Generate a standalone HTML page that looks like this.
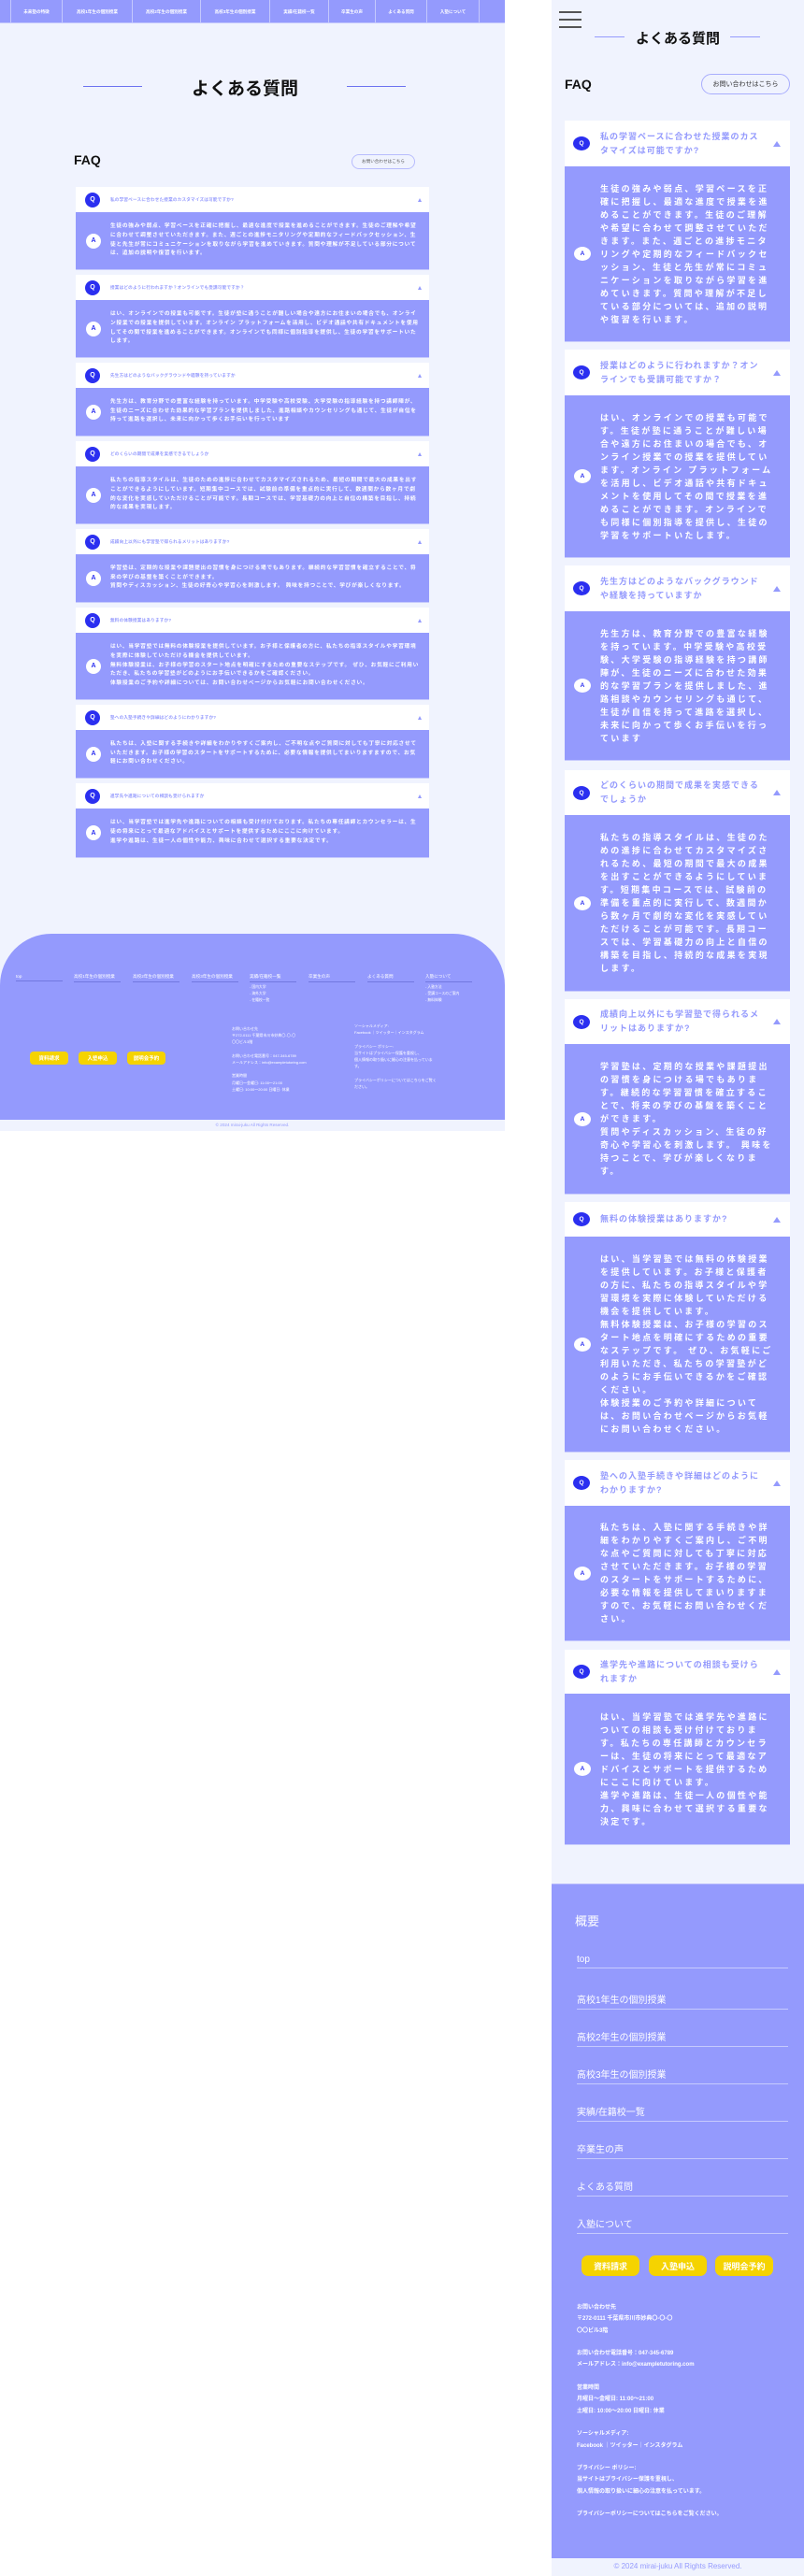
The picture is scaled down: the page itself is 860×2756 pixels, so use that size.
<!DOCTYPE html>
<html><head><meta charset="utf-8">
<style>
*{margin:0;padding:0;box-sizing:border-box}
body{width:860px;height:2756px;background:#fff;position:relative;font-family:"Liberation Sans","Noto Sans CJK JP",sans-serif;overflow:hidden}
.abs{position:absolute}
#dk{position:absolute;left:0;top:0;width:540px;height:1210px;background:#f0f3fe}
#mb{position:absolute;left:590px;top:0;width:270px;height:2756px;background:#f0f3fe}
.nav{position:absolute;left:0;top:0;width:540px;height:25px;background:#949afd;border-bottom:1px solid #c4c8fd}
.nav div{position:absolute;top:0;height:25px;border-left:1px solid #c4c8fd;color:#fff;font-size:4.6px;font-weight:bold;display:flex;align-items:center;justify-content:center}
.dq{position:absolute;left:81px;width:378px;background:#fff;display:flex;align-items:center}
.da{position:absolute;left:81px;width:378px;background:#949afd;border-bottom:1px solid #c6cafd;display:flex;align-items:center}
.dq .c{position:absolute;left:10px;width:16px;height:16px;border-radius:50%;background:#2b2ff0;color:#fff;font-size:7px;font-weight:bold;display:flex;align-items:center;justify-content:center}
.dq .t{position:absolute;left:37px;color:#949afd;font-size:4.6px;font-weight:bold;letter-spacing:.2px}
.dq .tr{position:absolute;right:8px;width:0;height:0;border-left:2.5px solid transparent;border-right:2.5px solid transparent;border-bottom:4px solid #949afd}
.da .c{position:absolute;left:11px;width:16px;height:16px;border-radius:50%;background:#fff;color:#2b2ff0;font-size:7px;font-weight:bold;display:flex;align-items:center;justify-content:center}
.da .t{position:absolute;left:37px;right:9px;color:#fff;font-size:5.7px;font-weight:bold;letter-spacing:.75px;line-height:9.8px}
.mq{position:absolute;left:14px;width:241px;background:#fff;display:flex;align-items:center}
.ma{position:absolute;left:14px;width:241px;background:#949afd;border-bottom:1px solid #c6cafd;display:flex;align-items:center}
.mq .c{position:absolute;left:9px;width:18px;height:15px;border-radius:50%;background:#2b2ff0;color:#fff;font-size:6.5px;font-weight:bold;display:flex;align-items:center;justify-content:center}
.mq .t{position:absolute;left:38px;right:28px;color:#949afd;font-size:9px;font-weight:bold;letter-spacing:1px;line-height:15px}
.mq .tr{position:absolute;right:10px;width:0;height:0;border-left:4.5px solid transparent;border-right:4.5px solid transparent;border-bottom:6px solid #949afd}
.ma .c{position:absolute;left:10px;width:18px;height:15px;border-radius:50%;background:#fff;color:#2b2ff0;font-size:6.5px;font-weight:bold;display:flex;align-items:center;justify-content:center}
.ma .t{position:absolute;left:38px;width:186px;color:#fff;font-size:9px;font-weight:bold;letter-spacing:2.3px;line-height:14px}
.fl{position:absolute;top:1042px;width:50px;border-bottom:1px solid #7278e0;color:#fff;font-size:4.6px;padding-bottom:2px}
.sub{position:absolute;color:#fff;font-size:3.8px;line-height:7px}
.yb{position:absolute;background:#f5d300;color:#fff;border-radius:4px;display:flex;align-items:center;justify-content:center;font-weight:bold}
.ml{position:absolute;left:27px;width:226px;border-bottom:1.5px solid #c6cafd;color:#fff;font-size:10px;padding-bottom:3px}
</style></head><body>

<div id="dk">
 <div class="nav">
  <div style="left:11px;width:55px">未来塾の特徴</div>
  <div style="left:66px;width:75px">高校1年生の個別授業</div>
  <div style="left:141px;width:73px">高校2年生の個別授業</div>
  <div style="left:214px;width:74px">高校3年生の個別授業</div>
  <div style="left:288px;width:63px">実績/在籍校一覧</div>
  <div style="left:351px;width:50px">卒業生の声</div>
  <div style="left:401px;width:55px">よくある質問</div>
  <div style="left:456px;width:56px">入塾について</div>
  <div style="left:512px;width:28px"></div>
 </div>
 <div class="abs" style="left:89px;top:92px;width:63px;height:1px;background:#6c72f0"></div>
 <div class="abs" style="left:371px;top:92px;width:63px;height:1px;background:#6c72f0"></div>
 <div class="abs" style="left:200px;top:80px;width:124px;text-align:center;font-size:19px;font-weight:bold;color:#111">よくある質問</div>
 <div class="abs" style="left:79px;top:163px;font-size:14px;font-weight:bold;color:#111">FAQ</div>
 <div class="abs" style="left:376px;top:165px;width:68px;height:16px;border:1px solid #b8bcfd;border-radius:8px;font-size:4.6px;color:#555;display:flex;align-items:center;justify-content:center">お問い合わせはこちら</div>

 <div class="dq" style="top:200px;height:27px"><div class="c">Q</div><div class="t">私の学習ペースに合わせた授業のカスタマイズは可能ですか?</div><div class="tr"></div></div>
 <div class="da" style="top:227px;height:62px"><div class="c">A</div><div class="t">生徒の強みや弱点、学習ペースを正確に把握し、最適な進度で授業を進めることができます。生徒のご理解や希望に合わせて調整させていただきます。また、週ごとの進捗モニタリングや定期的なフィードバックセッション、生徒と先生が常にコミュニケーションを取りながら学習を進めていきます。質問や理解が不足している部分については、追加の説明や復習を行います。</div></div>

 <div class="dq" style="top:294px;height:27px"><div class="c">Q</div><div class="t">授業はどのように行われますか？オンラインでも受講可能ですか？</div><div class="tr"></div></div>
 <div class="da" style="top:321px;height:62px"><div class="c">A</div><div class="t">はい、オンラインでの授業も可能です。生徒が塾に通うことが難しい場合や遠方にお住まいの場合でも、オンライン授業での授業を提供しています。オンライン プラットフォームを活用し、ビデオ通話や共有ドキュメントを使用してその間で授業を進めることができます。オンラインでも同様に個別指導を提供し、生徒の学習をサポートいたします。</div></div>

 <div class="dq" style="top:388px;height:27px"><div class="c">Q</div><div class="t">先生方はどのようなバックグラウンドや経験を持っていますか</div><div class="tr"></div></div>
 <div class="da" style="top:415px;height:52px"><div class="c">A</div><div class="t">先生方は、教育分野での豊富な経験を持っています。中学受験や高校受験、大学受験の指導経験を持つ講師陣が、生徒のニーズに合わせた効果的な学習プランを提供しました、進路相談やカウンセリングも通じて、生徒が自信を持って進路を選択し、未来に向かって歩くお手伝いを行っています</div></div>

 <div class="dq" style="top:472px;height:27px"><div class="c">Q</div><div class="t">どのくらいの期間で成果を実感できるでしょうか</div><div class="tr"></div></div>
 <div class="da" style="top:499px;height:62px"><div class="c">A</div><div class="t">私たちの指導スタイルは、生徒のための進捗に合わせてカスタマイズされるため、最短の期間で最大の成果を出すことができるようにしています。短期集中コースでは、試験前の準備を重点的に実行して、数週間から数ヶ月で劇的な変化を実感していただけることが可能です。長期コースでは、学習基礎力の向上と自信の構築を目指し、持続的な成果を実現します。</div></div>

 <div class="dq" style="top:566px;height:27px"><div class="c">Q</div><div class="t">成績向上以外にも学習塾で得られるメリットはありますか?</div><div class="tr"></div></div>
 <div class="da" style="top:593px;height:52px"><div class="c">A</div><div class="t">学習塾は、定期的な授業や課題提出の習慣を身につける場でもあります。継続的な学習習慣を確立することで、将来の学びの基盤を築くことができます。<br>質問やディスカッション、生徒の好奇心や学習心を刺激します。 興味を持つことで、学びが楽しくなります。</div></div>

 <div class="dq" style="top:650px;height:27px"><div class="c">Q</div><div class="t">無料の体験授業はありますか?</div><div class="tr"></div></div>
 <div class="da" style="top:677px;height:72px"><div class="c">A</div><div class="t">はい、当学習塾では無料の体験授業を提供しています。お子様と保護者の方に、私たちの指導スタイルや学習環境を実際に体験していただける機会を提供しています。<br>無料体験授業は、お子様の学習のスタート地点を明確にするための重要なステップです。 ぜひ、お気軽にご利用いただき、私たちの学習塾がどのようにお手伝いできるかをご確認ください。<br>体験授業のご予約や詳細については、お問い合わせページからお気軽にお問い合わせください。</div></div>

 <div class="dq" style="top:754px;height:27px"><div class="c">Q</div><div class="t">塾への入塾手続きや詳細はどのようにわかりますか?</div><div class="tr"></div></div>
 <div class="da" style="top:781px;height:52px"><div class="c">A</div><div class="t">私たちは、入塾に関する手続きや詳細をわかりやすくご案内し、ご不明な点やご質問に対しても丁寧に対応させていただきます。お子様の学習のスタートをサポートするために、必要な情報を提供してまいりますますので、お気軽にお問い合わせください。</div></div>

 <div class="dq" style="top:838px;height:27px"><div class="c">Q</div><div class="t">進学先や進路についての相談も受けられますか</div><div class="tr"></div></div>
 <div class="da" style="top:865px;height:53px"><div class="c">A</div><div class="t">はい、当学習塾では進学先や進路についての相談も受け付けております。私たちの専任講師とカウンセラーは、生徒の将来にとって最適なアドバイスとサポートを提供するためにここに向けています。<br>進学や進路は、生徒一人の個性や能力、興味に合わせて選択する重要な決定です。</div></div>

 <div class="abs" style="left:0;top:999px;width:540px;height:199px;background:#949afd;border-radius:55px 55px 0 0"></div>
 <div class="fl" style="left:17px">top</div>
 <div class="fl" style="left:79px">高校1年生の個別授業</div>
 <div class="fl" style="left:142px">高校2年生の個別授業</div>
 <div class="fl" style="left:205px">高校3年生の個別授業</div>
 <div class="fl" style="left:267px">実績/在籍校一覧</div>
 <div class="fl" style="left:330px">卒業生の声</div>
 <div class="fl" style="left:393px">よくある質問</div>
 <div class="fl" style="left:455px">入塾について</div>
 <div class="sub" style="left:267px;top:1053px">- 国内大学<br>- 海外大学<br>- 在籍校一覧</div>
 <div class="sub" style="left:455px;top:1053px">- 入塾方法<br>- 受講コースのご案内<br>- 無料体験</div>
 <div class="yb" style="left:32px;top:1125px;width:41px;height:14px;font-size:5.5px">資料請求</div>
 <div class="yb" style="left:84px;top:1125px;width:41px;height:14px;font-size:5.5px">入塾申込</div>
 <div class="yb" style="left:136px;top:1125px;width:41px;height:14px;font-size:5.5px">説明会予約</div>
 <div class="sub" style="left:248px;top:1097px;font-size:4px;line-height:7.2px">お問い合わせ先<br>〒272-0111 千葉県市川市妙典〇-〇-〇<br>〇〇ビル3階<br><br>お問い合わせ電話番号：047-345-6789<br>メールアドレス：info@exampletutoring.com<br><br>営業時間<br>月曜日～金曜日: 11:00～21:00<br>土曜日: 10:00～20:00 日曜日: 休業</div>
 <div class="sub" style="left:379px;top:1094px;font-size:4px;line-height:7.2px">ソーシャルメディア:<br>Facebook ｜ツイッター｜インスタグラム<br><br>プライバシー ポリシー:<br>当サイトはプライバシー保護を重視し、<br>個人情報の取り扱いに細心の注意を払っていま<br>す。<br><br>プライバシーポリシーについてはこちらをご覧く<br>ださい。</div>
 <div class="abs" style="left:0;top:1198px;width:540px;height:12px;text-align:center;font-size:4.6px;line-height:12px;color:#949afd">© 2024 mirai-juku All Rights Reserved.</div>
</div>

<div id="mb">
 <div class="abs" style="left:8px;top:12px;width:24px;height:1.5px;background:#555"></div>
 <div class="abs" style="left:8px;top:20px;width:24px;height:1.5px;background:#555"></div>
 <div class="abs" style="left:8px;top:28px;width:24px;height:1.5px;background:#555"></div>
 <div class="abs" style="left:46px;top:39px;width:32px;height:1px;background:#949afd"></div>
 <div class="abs" style="left:191px;top:39px;width:32px;height:1px;background:#949afd"></div>
 <div class="abs" style="left:84px;top:30px;width:102px;text-align:center;font-size:15px;font-weight:bold;color:#111">よくある質問</div>
 <div class="abs" style="left:14px;top:82px;font-size:14px;font-weight:bold;color:#111">FAQ</div>
 <div class="abs" style="left:160px;top:79px;width:95px;height:22px;border:1px solid #a8adfd;border-radius:11px;font-size:7px;color:#333;display:flex;align-items:center;justify-content:center">お問い合わせはこちら</div>

 <div class="mq" style="top:129px;height:49px"><div class="c">Q</div><div class="t">私の学習ペースに合わせた授業のカスタマイズは可能ですか?</div><div class="tr"></div></div>
 <div class="ma" style="top:178px;height:188px"><div class="c">A</div><div class="t">生徒の強みや弱点、学習ペースを正確に把握し、最適な進度で授業を進めることができます。生徒のご理解や希望に合わせて調整させていただきます。また、週ごとの進捗モニタリングや定期的なフィードバックセッション、生徒と先生が常にコミュニケーションを取りながら学習を進めていきます。質問や理解が不足している部分については、追加の説明や復習を行います。</div></div>

 <div class="mq" style="top:374px;height:49px"><div class="c">Q</div><div class="t">授業はどのように行われますか？オンラインでも受講可能ですか？</div><div class="tr"></div></div>
 <div class="ma" style="top:423px;height:174px"><div class="c">A</div><div class="t">はい、オンラインでの授業も可能です。生徒が塾に通うことが難しい場合や遠方にお住まいの場合でも、オンライン授業での授業を提供しています。オンライン プラットフォームを活用し、ビデオ通話や共有ドキュメントを使用してその間で授業を進めることができます。オンラインでも同様に個別指導を提供し、生徒の学習をサポートいたします。</div></div>

 <div class="mq" style="top:605px;height:49px"><div class="c">Q</div><div class="t">先生方はどのようなバックグラウンドや経験を持っていますか</div><div class="tr"></div></div>
 <div class="ma" style="top:654px;height:160px"><div class="c">A</div><div class="t">先生方は、教育分野での豊富な経験を持っています。中学受験や高校受験、大学受験の指導経験を持つ講師陣が、生徒のニーズに合わせた効果的な学習プランを提供しました、進路相談やカウンセリングも通じて、生徒が自信を持って進路を選択し、未来に向かって歩くお手伝いを行っています</div></div>

 <div class="mq" style="top:824px;height:48px"><div class="c">Q</div><div class="t">どのくらいの期間で成果を実感できるでしょうか</div><div class="tr"></div></div>
 <div class="ma" style="top:872px;height:189px"><div class="c">A</div><div class="t">私たちの指導スタイルは、生徒のための進捗に合わせてカスタマイズされるため、最短の期間で最大の成果を出すことができるようにしています。短期集中コースでは、試験前の準備を重点的に実行して、数週間から数ヶ月で劇的な変化を実感していただけることが可能です。長期コースでは、学習基礎力の向上と自信の構築を目指し、持続的な成果を実現します。</div></div>

 <div class="mq" style="top:1069px;height:48px"><div class="c">Q</div><div class="t">成績向上以外にも学習塾で得られるメリットはありますか?</div><div class="tr"></div></div>
 <div class="ma" style="top:1117px;height:161px"><div class="c">A</div><div class="t">学習塾は、定期的な授業や課題提出の習慣を身につける場でもあります。継続的な学習習慣を確立することで、将来の学びの基盤を築くことができます。<br>質問やディスカッション、生徒の好奇心や学習心を刺激します。 興味を持つことで、学びが楽しくなります。</div></div>

 <div class="mq" style="top:1286px;height:37px"><div class="c">Q</div><div class="t">無料の体験授業はありますか?</div><div class="tr"></div></div>
 <div class="ma" style="top:1323px;height:231px"><div class="c">A</div><div class="t">はい、当学習塾では無料の体験授業を提供しています。お子様と保護者の方に、私たちの指導スタイルや学習環境を実際に体験していただける機会を提供しています。<br>無料体験授業は、お子様の学習のスタート地点を明確にするための重要なステップです。 ぜひ、お気軽にご利用いただき、私たちの学習塾がどのようにお手伝いできるかをご確認ください。<br>体験授業のご予約や詳細については、お問い合わせページからお気軽にお問い合わせください。</div></div>

 <div class="mq" style="top:1562px;height:49px"><div class="c">Q</div><div class="t">塾への入塾手続きや詳細はどのようにわかりますか?</div><div class="tr"></div></div>
 <div class="ma" style="top:1611px;height:145px"><div class="c">A</div><div class="t">私たちは、入塾に関する手続きや詳細をわかりやすくご案内し、ご不明な点やご質問に対しても丁寧に対応させていただきます。お子様の学習のスタートをサポートするために、必要な情報を提供してまいりますますので、お気軽にお問い合わせください。</div></div>

 <div class="mq" style="top:1765px;height:47px"><div class="c">Q</div><div class="t">進学先や進路についての相談も受けられますか</div><div class="tr"></div></div>
 <div class="ma" style="top:1812px;height:162px"><div class="c">A</div><div class="t">はい、当学習塾では進学先や進路についての相談も受け付けております。私たちの専任講師とカウンセラーは、生徒の将来にとって最適なアドバイスとサポートを提供するためにここに向けています。<br>進学や進路は、生徒一人の個性や能力、興味に合わせて選択する重要な決定です。</div></div>

 <div class="abs" style="left:0;top:2015px;width:270px;height:722px;background:#949afd;border-top:1px solid #c6cafd"></div>
 <div class="abs" style="left:25px;top:2045px;font-size:13px;color:#fff">概要</div>
 <div class="ml" style="top:2091px">top</div>
 <div class="ml" style="top:2131px">高校1年生の個別授業</div>
 <div class="ml" style="top:2171px">高校2年生の個別授業</div>
 <div class="ml" style="top:2211px">高校3年生の個別授業</div>
 <div class="ml" style="top:2251px">実績/在籍校一覧</div>
 <div class="ml" style="top:2291px">卒業生の声</div>
 <div class="ml" style="top:2331px">よくある質問</div>
 <div class="ml" style="top:2371px">入塾について</div>
 <div class="yb" style="left:32px;top:2413px;width:62px;height:22px;font-size:9px;border-radius:7px">資料請求</div>
 <div class="yb" style="left:104px;top:2413px;width:62px;height:22px;font-size:9px;border-radius:7px">入塾申込</div>
 <div class="yb" style="left:175px;top:2413px;width:62px;height:22px;font-size:9px;border-radius:7px">説明会予約</div>
 <div class="sub" style="left:27px;top:2463px;font-size:6px;line-height:12.3px;font-weight:bold">お問い合わせ先<br>〒272-0111 千葉県市川市妙典〇-〇-〇<br>〇〇ビル3階<br><br>お問い合わせ電話番号：047-345-6789<br>メールアドレス：info@exampletutoring.com<br><br>営業時間<br>月曜日～金曜日: 11:00～21:00<br>土曜日: 10:00～20:00 日曜日: 休業<br><br>ソーシャルメディア:<br>Facebook ｜ツイッター｜インスタグラム<br><br>プライバシー ポリシー:<br>当サイトはプライバシー保護を重視し、<br>個人情報の取り扱いに細心の注意を払っています。<br><br>プライバシーポリシーについてはこちらをご覧ください。</div>
 <div class="abs" style="left:0;top:2737px;width:270px;height:18px;text-align:center;font-size:8px;line-height:18px;color:#949afd">© 2024 mirai-juku All Rights Reserved.</div>
</div>
</body></html>
